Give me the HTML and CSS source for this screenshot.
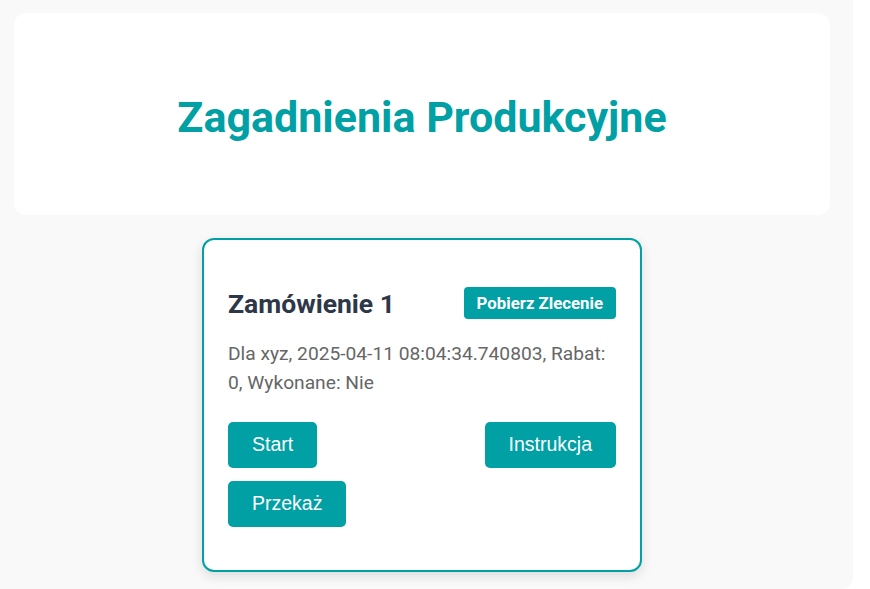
FILE: index.html
```html
<!DOCTYPE html>
<html lang="pl">
<head>
<meta charset="utf-8">
<title>Zagadnienia Produkcyjne</title>
<link rel="stylesheet" href="styles.css">
</head>
<body>
<div class="page">
  <header class="hero">
    <h1 class="hero-title">Zagadnienia Produkcyjne</h1>
  </header>
  <section class="orders">
    <article class="order-card">
      <div class="order-head">
        <h3 class="order-title">Zamówienie 1</h3>
        <button class="badge-btn">Pobierz Zlecenie</button>
      </div>
      <p class="order-desc">Dla xyz, 2025-04-11 08:04:34.740803, Rabat: 0, Wykonane: Nie</p>
      <div class="order-actions">
        <button class="action-btn">Start</button>
        <button class="action-btn action-right">Instrukcja</button>
        <button class="action-btn">Przekaż</button>
      </div>
    </article>
  </section>
</div>
</body>
</html>
```
FILE: styles.css
```css
html, body {
  margin: 0;
  padding: 0;
  background: #ffffff;
}
body {
  font-family: Roboto, "Liberation Sans", sans-serif;
  overflow: hidden;
}
.page {
  width: 853px;
  height: 589px;
  box-sizing: border-box;
  background: #f9f9f9;
  border-radius: 0 0 12px 0;
  padding: 13px 23px 0 14px;
}
.hero {
  background: #ffffff;
  border-radius: 12px;
  height: 202px;
  box-sizing: border-box;
  padding-top: 5px;
  display: flex;
  align-items: center;
  justify-content: center;
}
.hero-title {
  margin: 0;
  color: #00a0a5;
  font-size: 43px;
  font-weight: 700;
}
.orders {
  display: flex;
  justify-content: center;
  margin-top: 23px;
}
.order-card {
  width: 440px;
  box-sizing: border-box;
  background: #ffffff;
  border: 2px solid #00a0a5;
  border-radius: 12px;
  padding: 24px;
  box-shadow: 0 4px 12px rgba(0, 0, 0, 0.12);
}
.order-head {
  display: flex;
  align-items: center;
  justify-content: space-between;
  margin: 23px 0 21px;
}
.order-title {
  margin: 0;
  font-size: 26.5px;
  font-weight: 700;
  color: #2d3748;
}
.badge-btn {
  font-family: Roboto, sans-serif;
  font-weight: 700;
  font-size: 16.8px;
  color: #ffffff;
  background: #00a0a5;
  border: none;
  border-radius: 4px;
  padding: 6px 13px;
}
.order-desc {
  margin: 0 0 24px;
  font-size: 19.2px;
  line-height: 28.8px;
  color: #666666;
}
.order-actions {
  display: grid;
  grid-template-columns: auto auto;
  justify-content: space-between;
  justify-items: start;
  row-gap: 13px;
  margin-bottom: 19px;
}
.action-btn {
  font-family: "Liberation Sans", Arial, sans-serif;
  font-size: 19.5px;
  color: #ffffff;
  background: #00a0a5;
  border: none;
  border-radius: 5px;
  padding: 11px 24px 12px;
}
.action-right {
  justify-self: end;
}
```
